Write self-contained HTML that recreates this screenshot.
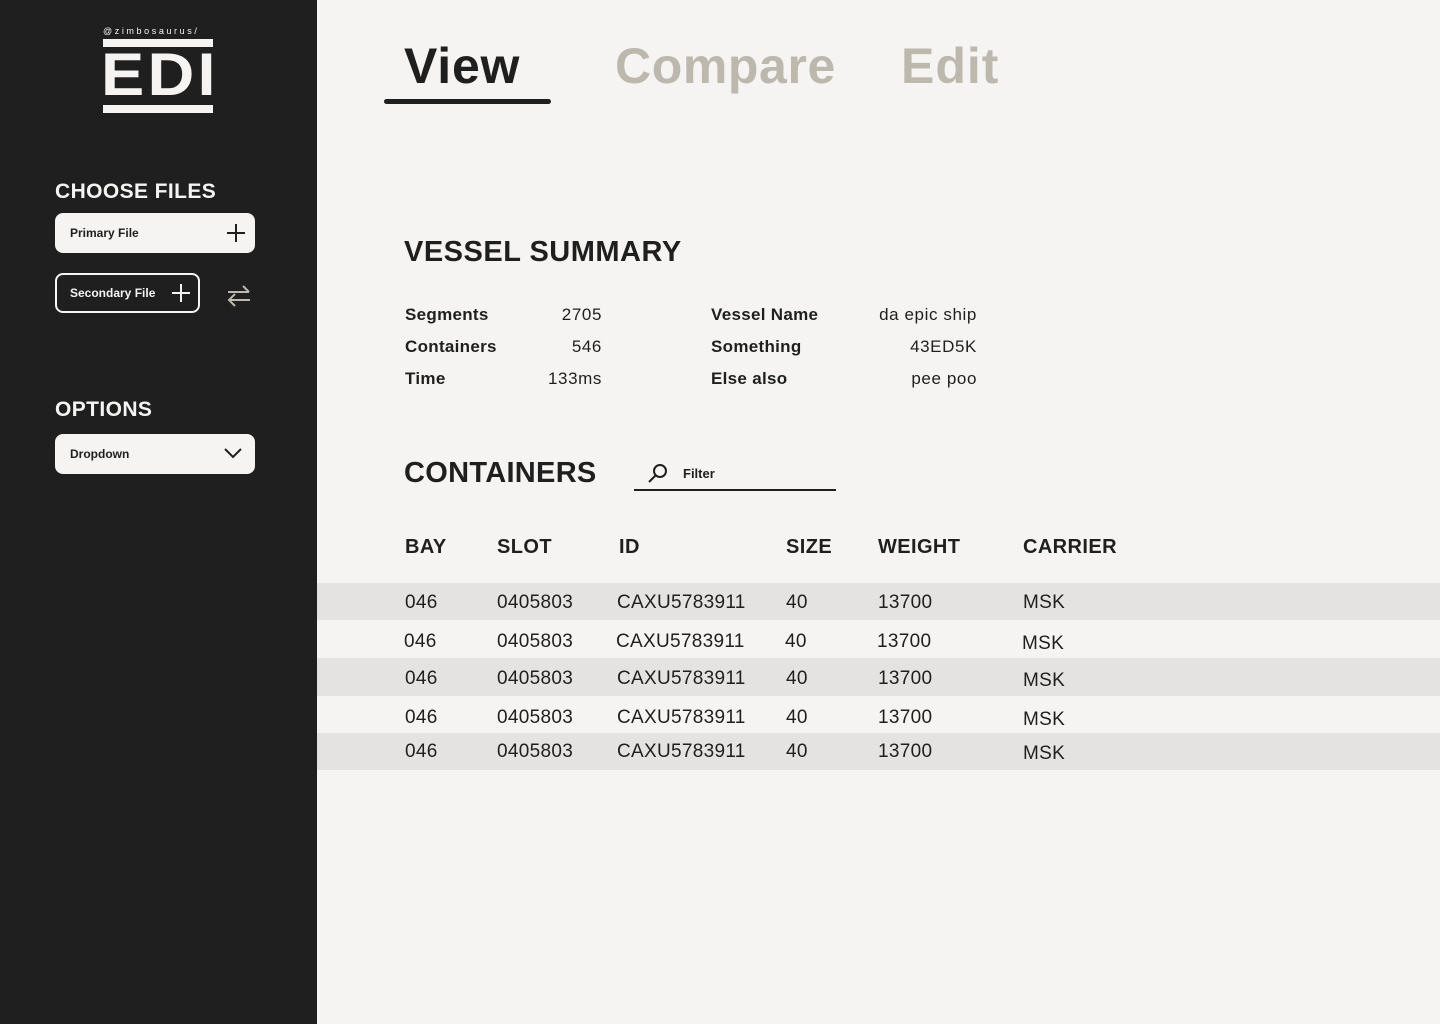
<!DOCTYPE html>
<html><head><style>
*{margin:0;padding:0;box-sizing:border-box}
body{width:1440px;height:1024px;background:#f5f4f2;font-family:"Liberation Sans",sans-serif;position:relative;overflow:hidden;color:#1f1f1f}
.side{position:absolute;left:0;top:0;width:317px;height:1024px;background:#1f1f1f}
.a{position:absolute;white-space:nowrap}
.w{color:#f5f4f2}
.btn{position:absolute;border-radius:8px;font-size:12px;font-weight:bold;padding-left:15px;display:flex;align-items:center}
.row{position:absolute;left:317px;width:1123px;height:37px;background:#e4e3e1}
.c{position:absolute;font-size:19px;letter-spacing:0.3px;margin-top:2px}
.h{position:absolute;font-size:20px;font-weight:bold;top:536px;letter-spacing:0.4px}
.k{position:absolute;font-size:17px;font-weight:bold;letter-spacing:0.3px;margin-top:1px}
.v{position:absolute;font-size:17px;text-align:right;letter-spacing:0.6px;margin-top:1px}
</style></head><body>
<div class="side"></div>
<div class="a w" style="left:103px;top:26px;font-size:9px;letter-spacing:2.6px">@zimbosaurus/</div>
<div class="a" style="left:103px;top:39px;width:110px;height:8px;background:#f5f4f2"></div>
<div class="a w" style="left:101px;top:44px;font-size:60px;font-weight:bold;line-height:62px;letter-spacing:3px;transform:scaleX(1.08);transform-origin:left">EDI</div>
<div class="a" style="left:103px;top:105px;width:110px;height:8px;background:#f5f4f2"></div>
<div class="a w" style="left:55px;top:180px;font-size:21px;font-weight:bold;letter-spacing:0.4px">CHOOSE FILES</div>
<div class="btn" style="left:55px;top:213px;width:200px;height:40px;background:#f5f4f2;color:#1f1f1f">Primary File</div>
<svg class="a" style="left:226px;top:223px" width="20" height="20"><path d="M10 1V19M1 10H19" stroke="#1f1f1f" stroke-width="2"/></svg>
<div class="btn w" style="left:55px;top:273px;width:145px;height:40px;border:2px solid #f5f4f2;padding-left:13px">Secondary File</div>
<svg class="a" style="left:171px;top:283px" width="20" height="20"><path d="M10 1V19M1 10H19" stroke="#f5f4f2" stroke-width="2"/></svg>
<svg class="a" style="left:226px;top:284px" width="26" height="24" fill="none" stroke="#bdb8ae" stroke-width="2"><path d="M2 8H23M17 2L23 8M24 16H3M9 10L3 16L9 22"/></svg>
<div class="a w" style="left:55px;top:398px;font-size:21px;font-weight:bold;letter-spacing:0.4px">OPTIONS</div>
<div class="btn" style="left:55px;top:434px;width:200px;height:40px;background:#f5f4f2;color:#1f1f1f">Dropdown</div>
<svg class="a" style="left:223px;top:446px" width="20" height="14" fill="none" stroke="#1f1f1f" stroke-width="2"><path d="M2 3L10 11L18 3"/></svg>

<div class="a" style="left:404px;top:37px;font-size:50px;font-weight:bold;letter-spacing:0.8px">View</div>
<div class="a" style="left:384px;top:99px;width:167px;height:5px;background:#1f1f1f;border-radius:3px"></div>
<div class="a" style="left:615px;top:37px;font-size:50px;font-weight:bold;color:#bdb8ae;letter-spacing:0.6px">Compare</div>
<div class="a" style="left:901px;top:37px;font-size:50px;font-weight:bold;color:#bdb8ae;letter-spacing:1px">Edit</div>

<div class="a" style="left:404px;top:236px;font-size:29px;font-weight:bold;letter-spacing:0.5px">VESSEL SUMMARY</div>
<div class="k" style="left:405px;top:304px">Segments</div><div class="v" style="left:520px;width:82px;top:304px">2705</div>
<div class="k" style="left:405px;top:336px">Containers</div><div class="v" style="left:520px;width:82px;top:336px">546</div>
<div class="k" style="left:405px;top:368px">Time</div><div class="v" style="left:520px;width:82px;top:368px">133ms</div>
<div class="k" style="left:711px;top:304px">Vessel Name</div><div class="v" style="left:850px;width:127px;top:304px">da epic ship</div>
<div class="k" style="left:711px;top:336px">Something</div><div class="v" style="left:850px;width:127px;top:336px">43ED5K</div>
<div class="k" style="left:711px;top:368px">Else also</div><div class="v" style="left:850px;width:127px;top:368px">pee poo</div>

<div class="a" style="left:404px;top:457px;font-size:29px;font-weight:bold;letter-spacing:0.3px">CONTAINERS</div>
<svg class="a" style="left:647px;top:462px" width="22" height="22" fill="none" stroke="#1f1f1f" stroke-width="2"><circle cx="13" cy="9" r="6"/><path d="M8.5 13.5L2 20"/></svg>
<div class="a" style="left:683px;top:466px;font-size:13px;font-weight:bold">Filter</div>
<div class="a" style="left:634px;top:489px;width:202px;height:2px;background:#1f1f1f"></div>

<div class="h" style="left:405px">BAY</div><div class="h" style="left:497px">SLOT</div><div class="h" style="left:619px">ID</div><div class="h" style="left:786px">SIZE</div><div class="h" style="left:878px">WEIGHT</div><div class="h" style="left:1023px">CARRIER</div>

<div class="row" style="top:583px"></div>
<div class="row" style="top:658px;height:38px"></div>
<div class="row" style="top:733px"></div>

<div class="c" style="left:405px;top:590px">046</div><div class="c" style="left:497px;top:590px">0405803</div><div class="c" style="left:617px;top:590px">CAXU5783911</div><div class="c" style="left:786px;top:590px">40</div><div class="c" style="left:878px;top:590px">13700</div><div class="c" style="left:1023px;top:590px">MSK</div>
<div class="c" style="left:404px;top:629px">046</div><div class="c" style="left:497px;top:629px">0405803</div><div class="c" style="left:616px;top:629px">CAXU5783911</div><div class="c" style="left:785px;top:629px">40</div><div class="c" style="left:877px;top:629px">13700</div><div class="c" style="left:1022px;top:631px">MSK</div>
<div class="c" style="left:405px;top:666px">046</div><div class="c" style="left:497px;top:666px">0405803</div><div class="c" style="left:617px;top:666px">CAXU5783911</div><div class="c" style="left:786px;top:666px">40</div><div class="c" style="left:878px;top:666px">13700</div><div class="c" style="left:1023px;top:668px">MSK</div>
<div class="c" style="left:405px;top:705px">046</div><div class="c" style="left:497px;top:705px">0405803</div><div class="c" style="left:617px;top:705px">CAXU5783911</div><div class="c" style="left:786px;top:705px">40</div><div class="c" style="left:878px;top:705px">13700</div><div class="c" style="left:1023px;top:707px">MSK</div>
<div class="c" style="left:405px;top:739px">046</div><div class="c" style="left:497px;top:739px">0405803</div><div class="c" style="left:617px;top:739px">CAXU5783911</div><div class="c" style="left:786px;top:739px">40</div><div class="c" style="left:878px;top:739px">13700</div><div class="c" style="left:1023px;top:741px">MSK</div>
</body></html>
